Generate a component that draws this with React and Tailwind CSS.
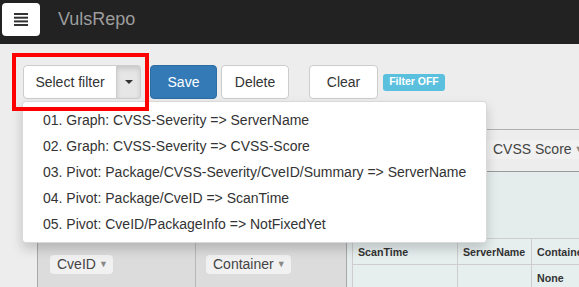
import React from 'react';

const filters = [
  '01. Graph: CVSS-Severity => ServerName',
  '02. Graph: CVSS-Severity => CVSS-Score',
  '03. Pivot: Package/CVSS-Severity/CveID/Summary => ServerName',
  '04. Pivot: Package/CveID => ScanTime',
  '05. Pivot: CveID/PackageInfo => NotFixedYet',
];

function Pill({ label }) {
  return (
    <span className="inline-flex items-center h-[19px] pl-[7px] pr-[5px] rounded-[4px] bg-[#f1f1f1] text-[14px] text-[#444] whitespace-nowrap">
      {label}
      <span className="ml-[3px] text-[9px] text-[#888]">▼</span>
    </span>
  );
}

function MenuIcon() {
  return (
    <svg width="14" height="13" viewBox="0 0 14 13">
      <rect x="0" y="0" width="14" height="2" fill="#333" />
      <rect x="0" y="3.7" width="14" height="2" fill="#333" />
      <rect x="0" y="7.4" width="14" height="2" fill="#333" />
      <rect x="0" y="11" width="14" height="2" fill="#333" />
    </svg>
  );
}

export default function App() {
  return (
    <div className="relative w-[579px] h-[287px] overflow-hidden bg-[#ededed] font-['Liberation_Sans',Arial,sans-serif]">
      {/* Navbar */}
      <div className="h-[44px] bg-[#222222] flex items-start">
        <button className="ml-[2px] mt-[3px] w-[38px] h-[33px] bg-white rounded-[4px] flex items-center justify-center">
          <MenuIcon />
        </button>
        <span className="ml-[18px] mt-[9px] text-[18px] leading-[20px] text-[#9d9d9d]">VulsRepo</span>
      </div>

      {/* Toolbar */}
      <div className="mt-[21px] pl-[23px] flex items-center">
        <div className="flex">
          <button className="w-[94px] h-[34px] bg-white border border-[#cccccc] rounded-l-[4px] text-[14px] text-[#333]">
            Select filter
          </button>
          <button className="w-[24px] h-[34px] bg-[#e6e6e6] border border-l-0 border-[#cccccc] rounded-r-[4px] shadow-[inset_0_3px_5px_rgba(0,0,0,0.125)] flex items-center justify-center">
            <span className="w-0 h-0 border-x-[4px] border-x-transparent border-t-[4px] border-t-[#333]" />
          </button>
        </div>
        <button className="ml-[9px] w-[67px] h-[34px] bg-[#337ab7] border border-[#2e6da4] rounded-[4px] text-[14px] text-white">
          Save
        </button>
        <button className="ml-[4px] w-[68px] h-[34px] bg-white border border-[#cccccc] rounded-[4px] text-[14px] text-[#333]">
          Delete
        </button>
        <button className="ml-[20px] w-[69px] h-[34px] bg-white border border-[#cccccc] rounded-[4px] text-[14px] text-[#333]">
          Clear
        </button>
        <span className="ml-[5px] w-[62px] h-[17px] rounded-[3px] bg-[#5bc0de] text-white text-[10.5px] font-bold flex items-center justify-center">
          Filter OFF
        </span>
      </div>

      {/* Pivot UI behind the menu */}
      <div className="mt-[30px] w-[700px]">
        <div className="flex">
          <div className="w-[348px]" />
          <div className="flex-1 h-[43px] border-y border-t-[#b0b0b0] border-b-[#9a9a9a] pl-[138px] pt-[7px]">
            <Pill label="CVSS Score" />
          </div>
        </div>
        <div className="flex h-[140px]">
          <div className="w-[37px]" />
          <div className="flex bg-[#dcdcdc] border-x border-[#a8a8a8]">
            <div className="w-[158px] border-r border-[#b8b8b8] pl-[12px] pt-[80px]">
              <Pill label="CveID" />
            </div>
            <div className="w-[150px] pl-[10px] pt-[80px]">
              <Pill label="Container" />
            </div>
          </div>
          <div className="flex-1 bg-[#e4ecec] pl-[5px] pt-[66px]">
            <table className="border-collapse text-[10.67px] font-bold text-[#333]">
              <thead>
                <tr>
                  <th className="w-[105px] h-[26px] px-[5px] text-left bg-[#e6eeee] border border-[#cdcdcd]">ScanTime</th>
                  <th className="w-[74px] h-[26px] px-[5px] text-left bg-[#e6eeee] border border-[#cdcdcd]">ServerName</th>
                  <th className="w-[100px] h-[26px] px-[5px] text-left bg-[#e6eeee] border border-[#cdcdcd]">Container</th>
                </tr>
              </thead>
              <tbody>
                <tr>
                  <th className="h-[26px] bg-[#e6eeee] border border-[#cdcdcd]" />
                  <th className="h-[26px] bg-[#e6eeee] border border-[#cdcdcd]" />
                  <th className="h-[26px] px-[5px] text-left bg-[#e6eeee] border border-[#cdcdcd]">None</th>
                </tr>
              </tbody>
            </table>
          </div>
        </div>
      </div>

      {/* Open dropdown menu */}
      <ul className="absolute left-[22px] top-[101px] w-[465px] py-[5px] bg-white border border-[rgba(0,0,0,0.15)] rounded-[4px] shadow-[0_6px_12px_rgba(0,0,0,0.175)] z-10">
        {filters.map((f) => (
          <li key={f} className="px-[20px] py-[3px] leading-[20px] text-[14px] text-[#333] whitespace-nowrap">
            {f}
          </li>
        ))}
      </ul>

      {/* Highlight box */}
      <div className="absolute left-[12px] top-[53px] w-[137px] h-[58px] border-4 border-[#ff0000] z-20" />
    </div>
  );
}
